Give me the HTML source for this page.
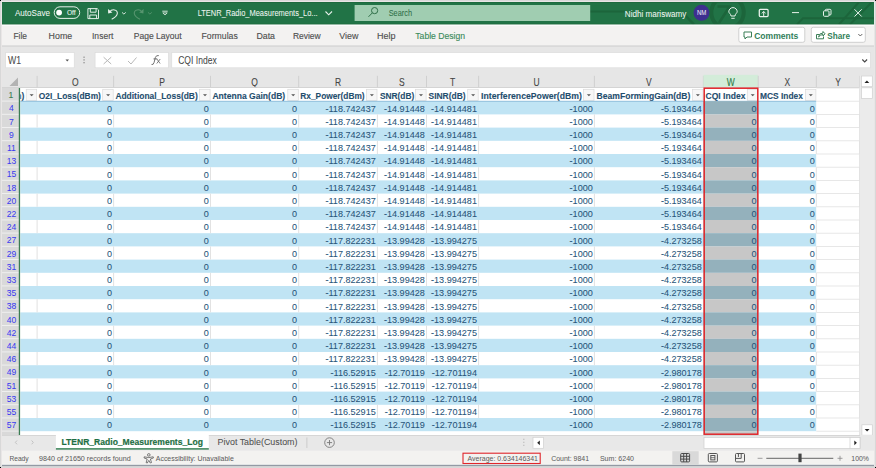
<!DOCTYPE html>
<html><head><meta charset="utf-8">
<style>
*{margin:0;padding:0}
html,body{width:876px;height:468px;overflow:hidden;background:#d6d6d6}
svg{display:block;font-family:"Liberation Sans",sans-serif}
</style></head><body>
<svg width="876" height="468" viewBox="0 0 876 468">
<rect x="0" y="0" width="876" height="468" fill="#d8d8d8" />
<rect x="1" y="1" width="874" height="465" fill="#e9e6e6" />
<rect x="2" y="2" width="872" height="22.7" fill="#217346" />
<rect x="2" y="2" width="872" height="1" fill="#1d6a3e" />
<rect x="2" y="23.7" width="872" height="1" fill="#1d6a3e" />
<clipPath id="tb"><rect x="2" y="2" width="872" height="22.5"/></clipPath><g clip-path="url(#tb)">
<circle cx="727.5" cy="12.5" r="16.2" fill="none" stroke="#1c653b" stroke-width="4"/>
<path d="M717.5 6.5 H729.5 L719 23" fill="none" stroke="#1c653b" stroke-width="2.6"/>
<path d="M683 13 L694 24.5" stroke="#1c653b" stroke-width="2.5"/>
<path d="M590 11.4 H625" stroke="#1c653b" stroke-width="2"/>
<path d="M797 24.5 L803 18.3 H874" fill="none" stroke="#1c653b" stroke-width="2"/>
<path d="M839 24.5 L859 2 M850 24.5 L872 2" stroke="#1c653b" stroke-width="2"/>
</g>
<text transform="translate(15.00 15.60) scale(0.9091 1)" font-size="8.88" fill="#eef5f0" stroke="#eef5f0" stroke-width="0.055">AutoSave</text>
<rect x="54.2" y="6.8" width="25.5" height="11.6" rx="5.8" fill="none" stroke="#e8f1eb" stroke-width="1"/>
<circle cx="59.1" cy="12.6" r="2.9" fill="#ffffff"/>
<text transform="translate(66.90 15.00) scale(0.8696 1)" font-size="7.59" fill="#e8f1eb" stroke="#e8f1eb" stroke-width="0.115">Off</text>
<g fill="none" stroke="#e3efe7" stroke-width="1"><path d="M87.9 8.6 H97.2 L98.5 9.9 V18.6 H87.9 Z"/><path d="M90.3 8.6 V12.2 H96.1 V8.6"/><path d="M89.8 18.6 V15 H96.6 V18.6"/></g>
<path d="M108 9 L108.2 13.6 L112.4 12.6 Z" fill="#e8f1eb"/>
<path d="M109.6 12 C111.8 8.6 117.8 9.3 117.3 13.6 C117 16 114.5 17.8 111.7 19.3" fill="none" stroke="#e8f1eb" stroke-width="1.05"/>
<path d="M122 12.4 L123.9 14.1 L125.8 12.4" fill="none" stroke="#e8f1eb" stroke-width="0.9"/>
<path d="M143.6 9 L143.4 13.6 L139.2 12.6 Z" fill="#57956f"/>
<path d="M142 12 C139.8 8.6 133.8 9.3 134.3 13.6 C134.6 16 137.1 17.8 139.9 19.3" fill="none" stroke="#57956f" stroke-width="1.05"/>
<path d="M148 12.4 L149.9 14.1 L151.8 12.4" fill="none" stroke="#57956f" stroke-width="0.9"/>
<path d="M162.3 11.2 H167.7" stroke="#e8f1eb" stroke-width="0.9"/><path d="M162.8 12.9 L165 15 L167.2 12.9 Z" fill="none" stroke="#e8f1eb" stroke-width="0.8"/>
<text transform="translate(197.70 16.40) scale(0.8475 1)" font-size="8.83" fill="#eef5f0" stroke="#eef5f0" stroke-width="0.059">LTENR_Radio_Measurements_Lo...</text>
<path d="M325.5 11.5 L328.7 14.8 L332 11.5" fill="none" stroke="#e8f1eb" stroke-width="1.1"/>
<rect x="354.6" y="5" width="235.6" height="16" fill="#a0cdb1" />
<g fill="none" stroke="#2f6f48" stroke-width="1"><circle cx="374.6" cy="10.6" r="3.1"/><path d="M372.3 12.9 L368.5 16.8"/></g>
<text transform="translate(388.70 16.30) scale(0.8000 1)" font-size="9.19" fill="#2f6f48" stroke="#2f6f48" stroke-width="0.062">Search</text>
<text transform="translate(624.80 16.80) scale(0.9091 1)" font-size="8.89" fill="#eef5f0" stroke="#eef5f0" stroke-width="0.055">Nidhi mariswamy</text>
<circle cx="701.5" cy="12.8" r="8" fill="#3d2f8f"/>
<text transform="translate(696.88 15.40) scale(0.8200 1)" font-size="7.40" fill="#f4f2fa">NM</text>
<g fill="none" stroke="#e8f1eb" stroke-width="1"><path d="M731 16 C731 14 728.8 13 728.8 11.8 A4.2 4.2 0 0 1 737.2 11.8 C737.2 13 735 14 735 16 Z"/><path d="M731.3 18.3 H734.7"/></g>
<g fill="none" stroke="#e8f1eb" stroke-width="1"><rect x="759.3" y="9.4" width="8.8" height="7.2" rx="1" stroke-width="1.3"/><path d="M763.7 16 V11.6 M761.9 13.4 L763.7 11.4 L765.5 13.4"/></g>
<path d="M792 12.6 H799" stroke="#e8f1eb" stroke-width="1"/>
<g fill="none" stroke="#e8f1eb" stroke-width="1"><rect x="823.5" y="10.8" width="5.5" height="5.5" rx="1"/><path d="M825.3 10.8 V10.3 Q825.3 9.3 826.3 9.3 H830 Q831 9.3 831 10.3 V14 Q831 15 830 15 H829"/></g>
<path d="M854.5 9.3 L861.7 16.5 M861.7 9.3 L854.5 16.5" stroke="#e8f1eb" stroke-width="1"/>
<rect x="2" y="24.7" width="872" height="20.3" fill="#f3f2f1" />
<rect x="2" y="24.7" width="872" height="1.2" fill="#fcfcfc" />
<rect x="2" y="45" width="872" height="2" fill="#d9d9d9" />
<text transform="translate(13.40 38.90) scale(0.8614 1)" font-size="9.80" fill="#4e4e4e" stroke="#4e4e4e" stroke-width="0.139">File</text>
<text transform="translate(48.60 38.90) scale(0.9026 1)" font-size="9.80" fill="#4e4e4e" stroke="#4e4e4e" stroke-width="0.133">Home</text>
<text transform="translate(92.00 38.90) scale(0.8731 1)" font-size="9.80" fill="#4e4e4e" stroke="#4e4e4e" stroke-width="0.137">Insert</text>
<text transform="translate(133.70 38.90) scale(0.8703 1)" font-size="9.80" fill="#4e4e4e" stroke="#4e4e4e" stroke-width="0.138">Page Layout</text>
<text transform="translate(201.50 38.90) scale(0.8887 1)" font-size="9.80" fill="#4e4e4e" stroke="#4e4e4e" stroke-width="0.135">Formulas</text>
<text transform="translate(256.40 38.90) scale(0.8982 1)" font-size="9.80" fill="#4e4e4e" stroke="#4e4e4e" stroke-width="0.134">Data</text>
<text transform="translate(292.90 38.90) scale(0.8674 1)" font-size="9.80" fill="#4e4e4e" stroke="#4e4e4e" stroke-width="0.138">Review</text>
<text transform="translate(339.20 38.90) scale(0.9104 1)" font-size="9.80" fill="#4e4e4e" stroke="#4e4e4e" stroke-width="0.132">View</text>
<text transform="translate(377.00 38.90) scale(0.9227 1)" font-size="9.80" fill="#4e4e4e" stroke="#4e4e4e" stroke-width="0.130">Help</text>
<text transform="translate(415.30 38.90) scale(0.8808 1)" font-size="9.80" fill="#3a8a5a" stroke="#3a8a5a" stroke-width="0.136">Table Design</text>
<rect x="738.8" y="27.3" width="66" height="15" rx="2" fill="#ffffff" stroke="#cfcfcf" stroke-width="1"/>
<path d="M744 32 H751.5 V37 H747 L745 39 V37 H744 Z" fill="none" stroke="#3b7f57" stroke-width="1"/>
<text transform="translate(754.20 38.80) scale(0.9091 1)" font-size="9.41" fill="#32805a" font-weight="bold">Comments</text>
<rect x="811.3" y="27.3" width="54" height="15" rx="2" fill="#ffffff" stroke="#cfcfcf" stroke-width="1"/>
<g fill="none" stroke="#3b7f57" stroke-width="1"><path d="M819 34.5 H816.5 V38.8 H823.5 V36.5"/><path d="M818.5 37 Q819 33 823 33 V31.5 L825 33.8 L823 36 V34.5 Q820.5 34.5 818.5 37 Z"/></g>
<text transform="translate(827.20 38.80) scale(0.9091 1)" font-size="9.02" fill="#32805a" font-weight="bold">Share</text>
<path d="M858.3 34 L860.3 36 L862.3 34" fill="none" stroke="#555" stroke-width="0.9"/>
<rect x="2" y="47" width="872" height="28.5" fill="#e6e6e6" />
<rect x="2" y="45" width="872" height="0.8" fill="#e0e0e0" />
<rect x="5.7" y="52.6" width="68.5" height="15.2" fill="#ffffff" stroke="#d9d9d9" stroke-width="0.6"/>
<text transform="translate(8.00 63.70) scale(0.8696 1)" font-size="10.04" fill="#4a4a4a" stroke="#4a4a4a" stroke-width="0.057">W1</text>
<path d="M65.5 59.6 H69 L67.25 61.4 Z" fill="#555"/>
<g fill="#8a8a8a"><rect x="83.4" y="56.6" width="1.3" height="1.2"/><rect x="83.4" y="59.3" width="1.3" height="1.2"/><rect x="83.4" y="62.1" width="1.3" height="1.2"/></g>
<rect x="95.1" y="52.6" width="73.3" height="15.2" fill="#ffffff" stroke="#d9d9d9" stroke-width="0.6"/>
<path d="M103.6 57.2 L111.2 64 M111.2 57.2 L103.6 64" stroke="#b8b8b8" stroke-width="1"/>
<path d="M128 61 L131 64 L136.5 57.5" fill="none" stroke="#b8b8b8" stroke-width="1"/>
<g fill="none" stroke="#5a5a5a" stroke-width="0.85" stroke-linecap="round"><path d="M151.9 64.6 Q153.4 65.2 154.1 62.4 L155.4 57.4 Q156.1 55.1 158.4 55.5"/><path d="M153.9 58.9 H156.8"/><path d="M157.1 59.3 L159.9 63.2 M160 59.3 L157 63.2" stroke-width="0.75"/></g>
<rect x="171.8" y="52.6" width="698.6" height="15.2" fill="#ffffff" stroke="#d9d9d9" stroke-width="0.6"/>
<text transform="translate(178.20 63.90) scale(0.8475 1)" font-size="10.09" fill="#4a4a4a" stroke="#4a4a4a" stroke-width="0.059">CQI Index</text>
<path d="M862.3 59.5 L864.7 62 L867.1 59.5" fill="none" stroke="#444" stroke-width="1.1"/>
<rect x="2" y="75.5" width="858" height="12.5" fill="#e6e6e6" />
<path d="M9.5 86 L18 86 L18 77.5 Z" fill="#b3b3b3"/>
<rect x="36.6" y="75.8" width="1" height="11.7" fill="#d0d0d0"/>
<text transform="translate(72.04 85.70) scale(0.8500 1)" font-size="10.00" fill="#444444" stroke="#444444" stroke-width="0.094">O</text>
<rect x="113.1" y="75.8" width="1" height="11.7" fill="#d0d0d0"/>
<text transform="translate(159.22 85.70) scale(0.8500 1)" font-size="10.00" fill="#444444" stroke="#444444" stroke-width="0.094">P</text>
<rect x="210.0" y="75.8" width="1" height="11.7" fill="#d0d0d0"/>
<text transform="translate(251.29 85.70) scale(0.8500 1)" font-size="10.00" fill="#444444" stroke="#444444" stroke-width="0.094">Q</text>
<rect x="298.2" y="75.8" width="1" height="11.7" fill="#d0d0d0"/>
<text transform="translate(334.98 85.70) scale(0.8500 1)" font-size="10.00" fill="#444444" stroke="#444444" stroke-width="0.094">R</text>
<rect x="376.9" y="75.8" width="1" height="11.7" fill="#d0d0d0"/>
<text transform="translate(399.12 85.70) scale(0.8500 1)" font-size="10.00" fill="#444444" stroke="#444444" stroke-width="0.094">S</text>
<rect x="426.0" y="75.8" width="1" height="11.7" fill="#d0d0d0"/>
<text transform="translate(449.95 85.70) scale(0.8500 1)" font-size="10.00" fill="#444444" stroke="#444444" stroke-width="0.094">T</text>
<rect x="478.1" y="75.8" width="1" height="11.7" fill="#d0d0d0"/>
<text transform="translate(533.43 85.70) scale(0.8500 1)" font-size="10.00" fill="#444444" stroke="#444444" stroke-width="0.094">U</text>
<rect x="593.9" y="75.8" width="1" height="11.7" fill="#d0d0d0"/>
<text transform="translate(646.07 85.70) scale(0.8500 1)" font-size="10.00" fill="#444444" stroke="#444444" stroke-width="0.094">V</text>
<rect x="702.9" y="75.8" width="1" height="11.7" fill="#d0d0d0"/>
<rect x="703.4" y="74.8" width="54.80000000000007" height="12.8" fill="#d3ecd9" />
<text transform="translate(726.79 85.70) scale(0.8500 1)" font-size="10.00" fill="#2e7a46" stroke="#2e7a46" stroke-width="0.094">W</text>
<rect x="757.7" y="75.8" width="1" height="11.7" fill="#d0d0d0"/>
<text transform="translate(784.42 85.70) scale(0.8500 1)" font-size="10.00" fill="#444444" stroke="#444444" stroke-width="0.094">X</text>
<rect x="815.8" y="75.8" width="1" height="11.7" fill="#d0d0d0"/>
<text transform="translate(835.17 85.70) scale(0.8500 1)" font-size="10.00" fill="#444444" stroke="#444444" stroke-width="0.094">Y</text>
<rect x="859.2" y="75.8" width="1" height="11.7" fill="#d0d0d0"/>
<rect x="2" y="87.1" width="858" height="0.9" fill="#d2d2d2" />
<rect x="2" y="88" width="858" height="347" fill="#ffffff" />
<rect x="2" y="88" width="17" height="347" fill="#d9d9d9" />
<rect x="20.3" y="101.2" width="795.9" height="13.2" fill="#c0e4f4" />
<rect x="20.3" y="127.6" width="795.9" height="13.2" fill="#c0e4f4" />
<rect x="20.3" y="154.0" width="795.9" height="13.2" fill="#c0e4f4" />
<rect x="20.3" y="180.4" width="795.9" height="13.2" fill="#c0e4f4" />
<rect x="20.3" y="206.8" width="795.9" height="13.2" fill="#c0e4f4" />
<rect x="20.3" y="233.2" width="795.9" height="13.2" fill="#c0e4f4" />
<rect x="20.3" y="259.6" width="795.9" height="13.2" fill="#c0e4f4" />
<rect x="20.3" y="286.0" width="795.9" height="13.2" fill="#c0e4f4" />
<rect x="20.3" y="312.4" width="795.9" height="13.2" fill="#c0e4f4" />
<rect x="20.3" y="338.8" width="795.9" height="13.2" fill="#c0e4f4" />
<rect x="20.3" y="365.2" width="795.9" height="13.2" fill="#c0e4f4" />
<rect x="20.3" y="391.6" width="795.9" height="13.2" fill="#c0e4f4" />
<rect x="20.3" y="418.0" width="795.9" height="13.2" fill="#c0e4f4" />
<rect x="36.6" y="114.4" width="1" height="13.2" fill="#e2e2e2" />
<rect x="113.1" y="114.4" width="1" height="13.2" fill="#e2e2e2" />
<rect x="210.0" y="114.4" width="1" height="13.2" fill="#e2e2e2" />
<rect x="298.2" y="114.4" width="1" height="13.2" fill="#e2e2e2" />
<rect x="376.9" y="114.4" width="1" height="13.2" fill="#e2e2e2" />
<rect x="426.0" y="114.4" width="1" height="13.2" fill="#e2e2e2" />
<rect x="478.1" y="114.4" width="1" height="13.2" fill="#e2e2e2" />
<rect x="593.9" y="114.4" width="1" height="13.2" fill="#e2e2e2" />
<rect x="702.9" y="114.4" width="1" height="13.2" fill="#e2e2e2" />
<rect x="757.7" y="114.4" width="1" height="13.2" fill="#e2e2e2" />
<rect x="815.8" y="114.4" width="1" height="13.2" fill="#e2e2e2" />
<rect x="859.2" y="114.4" width="1" height="13.2" fill="#e2e2e2" />
<rect x="36.6" y="140.8" width="1" height="13.2" fill="#e2e2e2" />
<rect x="113.1" y="140.8" width="1" height="13.2" fill="#e2e2e2" />
<rect x="210.0" y="140.8" width="1" height="13.2" fill="#e2e2e2" />
<rect x="298.2" y="140.8" width="1" height="13.2" fill="#e2e2e2" />
<rect x="376.9" y="140.8" width="1" height="13.2" fill="#e2e2e2" />
<rect x="426.0" y="140.8" width="1" height="13.2" fill="#e2e2e2" />
<rect x="478.1" y="140.8" width="1" height="13.2" fill="#e2e2e2" />
<rect x="593.9" y="140.8" width="1" height="13.2" fill="#e2e2e2" />
<rect x="702.9" y="140.8" width="1" height="13.2" fill="#e2e2e2" />
<rect x="757.7" y="140.8" width="1" height="13.2" fill="#e2e2e2" />
<rect x="815.8" y="140.8" width="1" height="13.2" fill="#e2e2e2" />
<rect x="859.2" y="140.8" width="1" height="13.2" fill="#e2e2e2" />
<rect x="36.6" y="167.2" width="1" height="13.2" fill="#e2e2e2" />
<rect x="113.1" y="167.2" width="1" height="13.2" fill="#e2e2e2" />
<rect x="210.0" y="167.2" width="1" height="13.2" fill="#e2e2e2" />
<rect x="298.2" y="167.2" width="1" height="13.2" fill="#e2e2e2" />
<rect x="376.9" y="167.2" width="1" height="13.2" fill="#e2e2e2" />
<rect x="426.0" y="167.2" width="1" height="13.2" fill="#e2e2e2" />
<rect x="478.1" y="167.2" width="1" height="13.2" fill="#e2e2e2" />
<rect x="593.9" y="167.2" width="1" height="13.2" fill="#e2e2e2" />
<rect x="702.9" y="167.2" width="1" height="13.2" fill="#e2e2e2" />
<rect x="757.7" y="167.2" width="1" height="13.2" fill="#e2e2e2" />
<rect x="815.8" y="167.2" width="1" height="13.2" fill="#e2e2e2" />
<rect x="859.2" y="167.2" width="1" height="13.2" fill="#e2e2e2" />
<rect x="36.6" y="193.6" width="1" height="13.2" fill="#e2e2e2" />
<rect x="113.1" y="193.6" width="1" height="13.2" fill="#e2e2e2" />
<rect x="210.0" y="193.6" width="1" height="13.2" fill="#e2e2e2" />
<rect x="298.2" y="193.6" width="1" height="13.2" fill="#e2e2e2" />
<rect x="376.9" y="193.6" width="1" height="13.2" fill="#e2e2e2" />
<rect x="426.0" y="193.6" width="1" height="13.2" fill="#e2e2e2" />
<rect x="478.1" y="193.6" width="1" height="13.2" fill="#e2e2e2" />
<rect x="593.9" y="193.6" width="1" height="13.2" fill="#e2e2e2" />
<rect x="702.9" y="193.6" width="1" height="13.2" fill="#e2e2e2" />
<rect x="757.7" y="193.6" width="1" height="13.2" fill="#e2e2e2" />
<rect x="815.8" y="193.6" width="1" height="13.2" fill="#e2e2e2" />
<rect x="859.2" y="193.6" width="1" height="13.2" fill="#e2e2e2" />
<rect x="36.6" y="220.0" width="1" height="13.2" fill="#e2e2e2" />
<rect x="113.1" y="220.0" width="1" height="13.2" fill="#e2e2e2" />
<rect x="210.0" y="220.0" width="1" height="13.2" fill="#e2e2e2" />
<rect x="298.2" y="220.0" width="1" height="13.2" fill="#e2e2e2" />
<rect x="376.9" y="220.0" width="1" height="13.2" fill="#e2e2e2" />
<rect x="426.0" y="220.0" width="1" height="13.2" fill="#e2e2e2" />
<rect x="478.1" y="220.0" width="1" height="13.2" fill="#e2e2e2" />
<rect x="593.9" y="220.0" width="1" height="13.2" fill="#e2e2e2" />
<rect x="702.9" y="220.0" width="1" height="13.2" fill="#e2e2e2" />
<rect x="757.7" y="220.0" width="1" height="13.2" fill="#e2e2e2" />
<rect x="815.8" y="220.0" width="1" height="13.2" fill="#e2e2e2" />
<rect x="859.2" y="220.0" width="1" height="13.2" fill="#e2e2e2" />
<rect x="36.6" y="246.4" width="1" height="13.2" fill="#e2e2e2" />
<rect x="113.1" y="246.4" width="1" height="13.2" fill="#e2e2e2" />
<rect x="210.0" y="246.4" width="1" height="13.2" fill="#e2e2e2" />
<rect x="298.2" y="246.4" width="1" height="13.2" fill="#e2e2e2" />
<rect x="376.9" y="246.4" width="1" height="13.2" fill="#e2e2e2" />
<rect x="426.0" y="246.4" width="1" height="13.2" fill="#e2e2e2" />
<rect x="478.1" y="246.4" width="1" height="13.2" fill="#e2e2e2" />
<rect x="593.9" y="246.4" width="1" height="13.2" fill="#e2e2e2" />
<rect x="702.9" y="246.4" width="1" height="13.2" fill="#e2e2e2" />
<rect x="757.7" y="246.4" width="1" height="13.2" fill="#e2e2e2" />
<rect x="815.8" y="246.4" width="1" height="13.2" fill="#e2e2e2" />
<rect x="859.2" y="246.4" width="1" height="13.2" fill="#e2e2e2" />
<rect x="36.6" y="272.8" width="1" height="13.2" fill="#e2e2e2" />
<rect x="113.1" y="272.8" width="1" height="13.2" fill="#e2e2e2" />
<rect x="210.0" y="272.8" width="1" height="13.2" fill="#e2e2e2" />
<rect x="298.2" y="272.8" width="1" height="13.2" fill="#e2e2e2" />
<rect x="376.9" y="272.8" width="1" height="13.2" fill="#e2e2e2" />
<rect x="426.0" y="272.8" width="1" height="13.2" fill="#e2e2e2" />
<rect x="478.1" y="272.8" width="1" height="13.2" fill="#e2e2e2" />
<rect x="593.9" y="272.8" width="1" height="13.2" fill="#e2e2e2" />
<rect x="702.9" y="272.8" width="1" height="13.2" fill="#e2e2e2" />
<rect x="757.7" y="272.8" width="1" height="13.2" fill="#e2e2e2" />
<rect x="815.8" y="272.8" width="1" height="13.2" fill="#e2e2e2" />
<rect x="859.2" y="272.8" width="1" height="13.2" fill="#e2e2e2" />
<rect x="36.6" y="299.2" width="1" height="13.2" fill="#e2e2e2" />
<rect x="113.1" y="299.2" width="1" height="13.2" fill="#e2e2e2" />
<rect x="210.0" y="299.2" width="1" height="13.2" fill="#e2e2e2" />
<rect x="298.2" y="299.2" width="1" height="13.2" fill="#e2e2e2" />
<rect x="376.9" y="299.2" width="1" height="13.2" fill="#e2e2e2" />
<rect x="426.0" y="299.2" width="1" height="13.2" fill="#e2e2e2" />
<rect x="478.1" y="299.2" width="1" height="13.2" fill="#e2e2e2" />
<rect x="593.9" y="299.2" width="1" height="13.2" fill="#e2e2e2" />
<rect x="702.9" y="299.2" width="1" height="13.2" fill="#e2e2e2" />
<rect x="757.7" y="299.2" width="1" height="13.2" fill="#e2e2e2" />
<rect x="815.8" y="299.2" width="1" height="13.2" fill="#e2e2e2" />
<rect x="859.2" y="299.2" width="1" height="13.2" fill="#e2e2e2" />
<rect x="36.6" y="325.6" width="1" height="13.2" fill="#e2e2e2" />
<rect x="113.1" y="325.6" width="1" height="13.2" fill="#e2e2e2" />
<rect x="210.0" y="325.6" width="1" height="13.2" fill="#e2e2e2" />
<rect x="298.2" y="325.6" width="1" height="13.2" fill="#e2e2e2" />
<rect x="376.9" y="325.6" width="1" height="13.2" fill="#e2e2e2" />
<rect x="426.0" y="325.6" width="1" height="13.2" fill="#e2e2e2" />
<rect x="478.1" y="325.6" width="1" height="13.2" fill="#e2e2e2" />
<rect x="593.9" y="325.6" width="1" height="13.2" fill="#e2e2e2" />
<rect x="702.9" y="325.6" width="1" height="13.2" fill="#e2e2e2" />
<rect x="757.7" y="325.6" width="1" height="13.2" fill="#e2e2e2" />
<rect x="815.8" y="325.6" width="1" height="13.2" fill="#e2e2e2" />
<rect x="859.2" y="325.6" width="1" height="13.2" fill="#e2e2e2" />
<rect x="36.6" y="352.0" width="1" height="13.2" fill="#e2e2e2" />
<rect x="113.1" y="352.0" width="1" height="13.2" fill="#e2e2e2" />
<rect x="210.0" y="352.0" width="1" height="13.2" fill="#e2e2e2" />
<rect x="298.2" y="352.0" width="1" height="13.2" fill="#e2e2e2" />
<rect x="376.9" y="352.0" width="1" height="13.2" fill="#e2e2e2" />
<rect x="426.0" y="352.0" width="1" height="13.2" fill="#e2e2e2" />
<rect x="478.1" y="352.0" width="1" height="13.2" fill="#e2e2e2" />
<rect x="593.9" y="352.0" width="1" height="13.2" fill="#e2e2e2" />
<rect x="702.9" y="352.0" width="1" height="13.2" fill="#e2e2e2" />
<rect x="757.7" y="352.0" width="1" height="13.2" fill="#e2e2e2" />
<rect x="815.8" y="352.0" width="1" height="13.2" fill="#e2e2e2" />
<rect x="859.2" y="352.0" width="1" height="13.2" fill="#e2e2e2" />
<rect x="36.6" y="378.4" width="1" height="13.2" fill="#e2e2e2" />
<rect x="113.1" y="378.4" width="1" height="13.2" fill="#e2e2e2" />
<rect x="210.0" y="378.4" width="1" height="13.2" fill="#e2e2e2" />
<rect x="298.2" y="378.4" width="1" height="13.2" fill="#e2e2e2" />
<rect x="376.9" y="378.4" width="1" height="13.2" fill="#e2e2e2" />
<rect x="426.0" y="378.4" width="1" height="13.2" fill="#e2e2e2" />
<rect x="478.1" y="378.4" width="1" height="13.2" fill="#e2e2e2" />
<rect x="593.9" y="378.4" width="1" height="13.2" fill="#e2e2e2" />
<rect x="702.9" y="378.4" width="1" height="13.2" fill="#e2e2e2" />
<rect x="757.7" y="378.4" width="1" height="13.2" fill="#e2e2e2" />
<rect x="815.8" y="378.4" width="1" height="13.2" fill="#e2e2e2" />
<rect x="859.2" y="378.4" width="1" height="13.2" fill="#e2e2e2" />
<rect x="36.6" y="404.8" width="1" height="13.2" fill="#e2e2e2" />
<rect x="113.1" y="404.8" width="1" height="13.2" fill="#e2e2e2" />
<rect x="210.0" y="404.8" width="1" height="13.2" fill="#e2e2e2" />
<rect x="298.2" y="404.8" width="1" height="13.2" fill="#e2e2e2" />
<rect x="376.9" y="404.8" width="1" height="13.2" fill="#e2e2e2" />
<rect x="426.0" y="404.8" width="1" height="13.2" fill="#e2e2e2" />
<rect x="478.1" y="404.8" width="1" height="13.2" fill="#e2e2e2" />
<rect x="593.9" y="404.8" width="1" height="13.2" fill="#e2e2e2" />
<rect x="702.9" y="404.8" width="1" height="13.2" fill="#e2e2e2" />
<rect x="757.7" y="404.8" width="1" height="13.2" fill="#e2e2e2" />
<rect x="815.8" y="404.8" width="1" height="13.2" fill="#e2e2e2" />
<rect x="859.2" y="404.8" width="1" height="13.2" fill="#e2e2e2" />
<rect x="816.3" y="87.6" width="43.4" height="0.8" fill="#e2e2e2" />
<rect x="816.3" y="100.8" width="43.4" height="0.8" fill="#e2e2e2" />
<rect x="816.3" y="114.0" width="43.4" height="0.8" fill="#e2e2e2" />
<rect x="816.3" y="127.2" width="43.4" height="0.8" fill="#e2e2e2" />
<rect x="816.3" y="140.4" width="43.4" height="0.8" fill="#e2e2e2" />
<rect x="816.3" y="153.6" width="43.4" height="0.8" fill="#e2e2e2" />
<rect x="816.3" y="166.8" width="43.4" height="0.8" fill="#e2e2e2" />
<rect x="816.3" y="180.0" width="43.4" height="0.8" fill="#e2e2e2" />
<rect x="816.3" y="193.2" width="43.4" height="0.8" fill="#e2e2e2" />
<rect x="816.3" y="206.4" width="43.4" height="0.8" fill="#e2e2e2" />
<rect x="816.3" y="219.6" width="43.4" height="0.8" fill="#e2e2e2" />
<rect x="816.3" y="232.8" width="43.4" height="0.8" fill="#e2e2e2" />
<rect x="816.3" y="246.0" width="43.4" height="0.8" fill="#e2e2e2" />
<rect x="816.3" y="259.2" width="43.4" height="0.8" fill="#e2e2e2" />
<rect x="816.3" y="272.4" width="43.4" height="0.8" fill="#e2e2e2" />
<rect x="816.3" y="285.6" width="43.4" height="0.8" fill="#e2e2e2" />
<rect x="816.3" y="298.8" width="43.4" height="0.8" fill="#e2e2e2" />
<rect x="816.3" y="312.0" width="43.4" height="0.8" fill="#e2e2e2" />
<rect x="816.3" y="325.2" width="43.4" height="0.8" fill="#e2e2e2" />
<rect x="816.3" y="338.4" width="43.4" height="0.8" fill="#e2e2e2" />
<rect x="816.3" y="351.6" width="43.4" height="0.8" fill="#e2e2e2" />
<rect x="816.3" y="364.8" width="43.4" height="0.8" fill="#e2e2e2" />
<rect x="816.3" y="378.0" width="43.4" height="0.8" fill="#e2e2e2" />
<rect x="816.3" y="391.2" width="43.4" height="0.8" fill="#e2e2e2" />
<rect x="816.3" y="404.4" width="43.4" height="0.8" fill="#e2e2e2" />
<rect x="816.3" y="417.6" width="43.4" height="0.8" fill="#e2e2e2" />
<rect x="816.3" y="430.8" width="43.4" height="0.8" fill="#e2e2e2" />
<rect x="859.2" y="88" width="0.9" height="347" fill="#dcdcdc" />
<rect x="2" y="100.6" width="17" height="1" fill="#efefef" />
<rect x="2" y="113.8" width="17" height="1" fill="#efefef" />
<rect x="2" y="127.0" width="17" height="1" fill="#efefef" />
<rect x="2" y="140.2" width="17" height="1" fill="#efefef" />
<rect x="2" y="153.4" width="17" height="1" fill="#efefef" />
<rect x="2" y="166.6" width="17" height="1" fill="#efefef" />
<rect x="2" y="179.8" width="17" height="1" fill="#efefef" />
<rect x="2" y="193.0" width="17" height="1" fill="#efefef" />
<rect x="2" y="206.2" width="17" height="1" fill="#efefef" />
<rect x="2" y="219.4" width="17" height="1" fill="#efefef" />
<rect x="2" y="232.6" width="17" height="1" fill="#efefef" />
<rect x="2" y="245.8" width="17" height="1" fill="#efefef" />
<rect x="2" y="259.0" width="17" height="1" fill="#efefef" />
<rect x="2" y="272.2" width="17" height="1" fill="#efefef" />
<rect x="2" y="285.4" width="17" height="1" fill="#efefef" />
<rect x="2" y="298.6" width="17" height="1" fill="#efefef" />
<rect x="2" y="311.8" width="17" height="1" fill="#efefef" />
<rect x="2" y="325.0" width="17" height="1" fill="#efefef" />
<rect x="2" y="338.2" width="17" height="1" fill="#efefef" />
<rect x="2" y="351.4" width="17" height="1" fill="#efefef" />
<rect x="2" y="364.6" width="17" height="1" fill="#efefef" />
<rect x="2" y="377.8" width="17" height="1" fill="#efefef" />
<rect x="2" y="391.0" width="17" height="1" fill="#efefef" />
<rect x="2" y="404.2" width="17" height="1" fill="#efefef" />
<rect x="2" y="417.4" width="17" height="1" fill="#efefef" />
<rect x="2" y="430.6" width="17" height="1" fill="#efefef" />
<rect x="2" y="443.8" width="17" height="1" fill="#efefef" />
<text transform="translate(8.62 98.20) scale(0.9000 1)" font-size="9.50" fill="#3b7a4f" stroke="#3b7a4f" stroke-width="0.111">1</text>
<text transform="translate(9.02 111.40) scale(0.9000 1)" font-size="9.50" fill="#3b3bf0" stroke="#3b3bf0" stroke-width="0.044">4</text>
<text transform="translate(9.02 124.60) scale(0.9000 1)" font-size="9.50" fill="#3b3bf0" stroke="#3b3bf0" stroke-width="0.044">7</text>
<text transform="translate(9.02 137.80) scale(0.9000 1)" font-size="9.50" fill="#3b3bf0" stroke="#3b3bf0" stroke-width="0.044">9</text>
<text transform="translate(6.96 151.00) scale(0.9000 1)" font-size="9.50" fill="#3b3bf0" stroke="#3b3bf0" stroke-width="0.044">11</text>
<text transform="translate(6.65 164.20) scale(0.9000 1)" font-size="9.50" fill="#3b3bf0" stroke="#3b3bf0" stroke-width="0.044">13</text>
<text transform="translate(6.65 177.40) scale(0.9000 1)" font-size="9.50" fill="#3b3bf0" stroke="#3b3bf0" stroke-width="0.044">15</text>
<text transform="translate(6.65 190.60) scale(0.9000 1)" font-size="9.50" fill="#3b3bf0" stroke="#3b3bf0" stroke-width="0.044">18</text>
<text transform="translate(6.65 203.80) scale(0.9000 1)" font-size="9.50" fill="#3b3bf0" stroke="#3b3bf0" stroke-width="0.044">20</text>
<text transform="translate(6.65 217.00) scale(0.9000 1)" font-size="9.50" fill="#3b3bf0" stroke="#3b3bf0" stroke-width="0.044">22</text>
<text transform="translate(6.65 230.20) scale(0.9000 1)" font-size="9.50" fill="#3b3bf0" stroke="#3b3bf0" stroke-width="0.044">24</text>
<text transform="translate(6.65 243.40) scale(0.9000 1)" font-size="9.50" fill="#3b3bf0" stroke="#3b3bf0" stroke-width="0.044">27</text>
<text transform="translate(6.65 256.60) scale(0.9000 1)" font-size="9.50" fill="#3b3bf0" stroke="#3b3bf0" stroke-width="0.044">29</text>
<text transform="translate(6.65 269.80) scale(0.9000 1)" font-size="9.50" fill="#3b3bf0" stroke="#3b3bf0" stroke-width="0.044">31</text>
<text transform="translate(6.65 283.00) scale(0.9000 1)" font-size="9.50" fill="#3b3bf0" stroke="#3b3bf0" stroke-width="0.044">33</text>
<text transform="translate(6.65 296.20) scale(0.9000 1)" font-size="9.50" fill="#3b3bf0" stroke="#3b3bf0" stroke-width="0.044">35</text>
<text transform="translate(6.65 309.40) scale(0.9000 1)" font-size="9.50" fill="#3b3bf0" stroke="#3b3bf0" stroke-width="0.044">38</text>
<text transform="translate(6.65 322.60) scale(0.9000 1)" font-size="9.50" fill="#3b3bf0" stroke="#3b3bf0" stroke-width="0.044">40</text>
<text transform="translate(6.65 335.80) scale(0.9000 1)" font-size="9.50" fill="#3b3bf0" stroke="#3b3bf0" stroke-width="0.044">42</text>
<text transform="translate(6.65 349.00) scale(0.9000 1)" font-size="9.50" fill="#3b3bf0" stroke="#3b3bf0" stroke-width="0.044">44</text>
<text transform="translate(6.65 362.20) scale(0.9000 1)" font-size="9.50" fill="#3b3bf0" stroke="#3b3bf0" stroke-width="0.044">46</text>
<text transform="translate(6.65 375.40) scale(0.9000 1)" font-size="9.50" fill="#3b3bf0" stroke="#3b3bf0" stroke-width="0.044">49</text>
<text transform="translate(6.65 388.60) scale(0.9000 1)" font-size="9.50" fill="#3b3bf0" stroke="#3b3bf0" stroke-width="0.044">51</text>
<text transform="translate(6.65 401.80) scale(0.9000 1)" font-size="9.50" fill="#3b3bf0" stroke="#3b3bf0" stroke-width="0.044">53</text>
<text transform="translate(6.65 415.00) scale(0.9000 1)" font-size="9.50" fill="#3b3bf0" stroke="#3b3bf0" stroke-width="0.044">55</text>
<text transform="translate(6.65 428.20) scale(0.9000 1)" font-size="9.50" fill="#3b3bf0" stroke="#3b3bf0" stroke-width="0.044">57</text>
<rect x="18.8" y="88" width="1.3" height="347" fill="#3a7d53" />
<rect x="26.2" y="89.3" width="10.5" height="11.2" fill="#f7f7f7" stroke="#dadada" stroke-width="0.7"/>
<path d="M29.6 94.2 H33.6 L31.6 96.2 Z" fill="#555"/>
<rect x="102.7" y="89.3" width="10.5" height="11.2" fill="#f7f7f7" stroke="#dadada" stroke-width="0.7"/>
<path d="M106.1 94.2 H110.1 L108.1 96.2 Z" fill="#555"/>
<text transform="translate(38.80 98.50) scale(0.8929 1)" font-size="9.43" fill="#1f4e6e" stroke="#1f4e6e" stroke-width="0.112" font-weight="bold">O2I_Loss(dBm)</text>
<rect x="199.6" y="89.3" width="10.5" height="11.2" fill="#f7f7f7" stroke="#dadada" stroke-width="0.7"/>
<path d="M203.0 94.2 H207.0 L205.0 96.2 Z" fill="#555"/>
<text transform="translate(115.40 98.50) scale(0.8929 1)" font-size="9.45" fill="#1f4e6e" stroke="#1f4e6e" stroke-width="0.112" font-weight="bold">Additional_Loss(dB)</text>
<rect x="287.8" y="89.3" width="10.5" height="11.2" fill="#f7f7f7" stroke="#dadada" stroke-width="0.7"/>
<path d="M291.2 94.2 H295.2 L293.2 96.2 Z" fill="#555"/>
<text transform="translate(212.40 98.50) scale(0.8929 1)" font-size="9.61" fill="#1f4e6e" stroke="#1f4e6e" stroke-width="0.112" font-weight="bold">Antenna Gain(dB)</text>
<rect x="366.5" y="89.3" width="10.5" height="11.2" fill="#f7f7f7" stroke="#dadada" stroke-width="0.7"/>
<path d="M369.9 94.2 H373.9 L371.9 96.2 Z" fill="#555"/>
<text transform="translate(300.30 98.50) scale(0.8929 1)" font-size="9.34" fill="#1f4e6e" stroke="#1f4e6e" stroke-width="0.112" font-weight="bold">Rx_Power(dBm)</text>
<rect x="415.6" y="89.3" width="10.5" height="11.2" fill="#f7f7f7" stroke="#dadada" stroke-width="0.7"/>
<path d="M419.0 94.2 H423.0 L421.0 96.2 Z" fill="#555"/>
<text transform="translate(379.90 98.50) scale(0.8929 1)" font-size="9.37" fill="#1f4e6e" stroke="#1f4e6e" stroke-width="0.112" font-weight="bold">SNR(dB)</text>
<rect x="467.7" y="89.3" width="10.5" height="11.2" fill="#f7f7f7" stroke="#dadada" stroke-width="0.7"/>
<path d="M471.1 94.2 H475.1 L473.1 96.2 Z" fill="#555"/>
<text transform="translate(428.50 98.50) scale(0.8929 1)" font-size="9.47" fill="#1f4e6e" stroke="#1f4e6e" stroke-width="0.112" font-weight="bold">SINR(dB)</text>
<rect x="583.5" y="89.3" width="10.5" height="11.2" fill="#f7f7f7" stroke="#dadada" stroke-width="0.7"/>
<path d="M586.9 94.2 H590.9 L588.9 96.2 Z" fill="#555"/>
<text transform="translate(481.10 98.50) scale(0.8929 1)" font-size="9.73" fill="#1f4e6e" stroke="#1f4e6e" stroke-width="0.112" font-weight="bold">InterferencePower(dBm)</text>
<rect x="692.5" y="89.3" width="10.5" height="11.2" fill="#f7f7f7" stroke="#dadada" stroke-width="0.7"/>
<path d="M695.9 94.2 H699.9 L697.9 96.2 Z" fill="#555"/>
<text transform="translate(596.60 98.50) scale(0.8929 1)" font-size="9.61" fill="#1f4e6e" stroke="#1f4e6e" stroke-width="0.112" font-weight="bold">BeamFormingGain(dB)</text>
<rect x="747.3" y="89.3" width="10.5" height="11.2" fill="#f7f7f7" stroke="#dadada" stroke-width="0.7"/>
<path d="M750.7 94.2 H754.7 L752.7 96.2 Z" fill="#555"/>
<text transform="translate(705.50 98.50) scale(0.8929 1)" font-size="9.58" fill="#1f4e6e" stroke="#1f4e6e" stroke-width="0.112" font-weight="bold">CQI Index</text>
<rect x="805.4" y="89.3" width="10.5" height="11.2" fill="#f7f7f7" stroke="#dadada" stroke-width="0.7"/>
<path d="M808.8 94.2 H812.8 L810.8 96.2 Z" fill="#555"/>
<text transform="translate(760.00 98.50) scale(0.8929 1)" font-size="9.44" fill="#1f4e6e" stroke="#1f4e6e" stroke-width="0.112" font-weight="bold">MCS Index</text>
<clipPath id="nclip"><rect x="20.3" y="88" width="16" height="13"/></clipPath><g clip-path="url(#nclip)">
<text transform="translate(2.68 98.50) scale(0.9000 1)" font-size="9.40" fill="#1f4e6e" stroke="#1f4e6e" stroke-width="0.111" font-weight="bold">dBm)</text>
</g>
<rect x="20.3" y="100.8" width="795.9" height="1" fill="#8fbfdb" />
<text transform="translate(106.95 111.60) scale(0.9172 1)" font-size="9.90" fill="#28557a" stroke="#28557a" stroke-width="0.065">0</text>
<text transform="translate(203.85 111.60) scale(0.9172 1)" font-size="9.90" fill="#28557a" stroke="#28557a" stroke-width="0.065">0</text>
<text transform="translate(292.05 111.60) scale(0.9172 1)" font-size="9.90" fill="#28557a" stroke="#28557a" stroke-width="0.065">0</text>
<text transform="translate(325.48 111.60) scale(0.9172 1)" font-size="9.90" fill="#28557a" stroke="#28557a" stroke-width="0.065">-118.742437</text>
<text transform="translate(384.00 111.60) scale(0.9172 1)" font-size="9.90" fill="#28557a" stroke="#28557a" stroke-width="0.065">-14.91448</text>
<text transform="translate(431.06 111.60) scale(0.9172 1)" font-size="9.90" fill="#28557a" stroke="#28557a" stroke-width="0.065">-14.914481</text>
<text transform="translate(569.57 111.60) scale(0.9172 1)" font-size="9.90" fill="#28557a" stroke="#28557a" stroke-width="0.065">-1000</text>
<text transform="translate(660.90 111.60) scale(0.9172 1)" font-size="9.90" fill="#28557a" stroke="#28557a" stroke-width="0.065">-5.193464</text>
<rect x="703.4" y="101.2" width="54.80000000000007" height="13.2" fill="#94b1bc" />
<text transform="translate(751.55 111.60) scale(0.9172 1)" font-size="9.90" fill="#28557a" stroke="#28557a" stroke-width="0.065">0</text>
<text transform="translate(809.65 111.60) scale(0.9172 1)" font-size="9.90" fill="#28557a" stroke="#28557a" stroke-width="0.065">0</text>
<text transform="translate(106.95 124.80) scale(0.9172 1)" font-size="9.90" fill="#28557a" stroke="#28557a" stroke-width="0.065">0</text>
<text transform="translate(203.85 124.80) scale(0.9172 1)" font-size="9.90" fill="#28557a" stroke="#28557a" stroke-width="0.065">0</text>
<text transform="translate(292.05 124.80) scale(0.9172 1)" font-size="9.90" fill="#28557a" stroke="#28557a" stroke-width="0.065">0</text>
<text transform="translate(325.48 124.80) scale(0.9172 1)" font-size="9.90" fill="#28557a" stroke="#28557a" stroke-width="0.065">-118.742437</text>
<text transform="translate(384.00 124.80) scale(0.9172 1)" font-size="9.90" fill="#28557a" stroke="#28557a" stroke-width="0.065">-14.91448</text>
<text transform="translate(431.06 124.80) scale(0.9172 1)" font-size="9.90" fill="#28557a" stroke="#28557a" stroke-width="0.065">-14.914481</text>
<text transform="translate(569.57 124.80) scale(0.9172 1)" font-size="9.90" fill="#28557a" stroke="#28557a" stroke-width="0.065">-1000</text>
<text transform="translate(660.90 124.80) scale(0.9172 1)" font-size="9.90" fill="#28557a" stroke="#28557a" stroke-width="0.065">-5.193464</text>
<rect x="703.4" y="114.4" width="54.80000000000007" height="13.2" fill="#c7c7c7" />
<text transform="translate(751.55 124.80) scale(0.9172 1)" font-size="9.90" fill="#28557a" stroke="#28557a" stroke-width="0.065">0</text>
<text transform="translate(809.65 124.80) scale(0.9172 1)" font-size="9.90" fill="#28557a" stroke="#28557a" stroke-width="0.065">0</text>
<text transform="translate(106.95 138.00) scale(0.9172 1)" font-size="9.90" fill="#28557a" stroke="#28557a" stroke-width="0.065">0</text>
<text transform="translate(203.85 138.00) scale(0.9172 1)" font-size="9.90" fill="#28557a" stroke="#28557a" stroke-width="0.065">0</text>
<text transform="translate(292.05 138.00) scale(0.9172 1)" font-size="9.90" fill="#28557a" stroke="#28557a" stroke-width="0.065">0</text>
<text transform="translate(325.48 138.00) scale(0.9172 1)" font-size="9.90" fill="#28557a" stroke="#28557a" stroke-width="0.065">-118.742437</text>
<text transform="translate(384.00 138.00) scale(0.9172 1)" font-size="9.90" fill="#28557a" stroke="#28557a" stroke-width="0.065">-14.91448</text>
<text transform="translate(431.06 138.00) scale(0.9172 1)" font-size="9.90" fill="#28557a" stroke="#28557a" stroke-width="0.065">-14.914481</text>
<text transform="translate(569.57 138.00) scale(0.9172 1)" font-size="9.90" fill="#28557a" stroke="#28557a" stroke-width="0.065">-1000</text>
<text transform="translate(660.90 138.00) scale(0.9172 1)" font-size="9.90" fill="#28557a" stroke="#28557a" stroke-width="0.065">-5.193464</text>
<rect x="703.4" y="127.6" width="54.80000000000007" height="13.2" fill="#94b1bc" />
<text transform="translate(751.55 138.00) scale(0.9172 1)" font-size="9.90" fill="#28557a" stroke="#28557a" stroke-width="0.065">0</text>
<text transform="translate(809.65 138.00) scale(0.9172 1)" font-size="9.90" fill="#28557a" stroke="#28557a" stroke-width="0.065">0</text>
<text transform="translate(106.95 151.20) scale(0.9172 1)" font-size="9.90" fill="#28557a" stroke="#28557a" stroke-width="0.065">0</text>
<text transform="translate(203.85 151.20) scale(0.9172 1)" font-size="9.90" fill="#28557a" stroke="#28557a" stroke-width="0.065">0</text>
<text transform="translate(292.05 151.20) scale(0.9172 1)" font-size="9.90" fill="#28557a" stroke="#28557a" stroke-width="0.065">0</text>
<text transform="translate(325.48 151.20) scale(0.9172 1)" font-size="9.90" fill="#28557a" stroke="#28557a" stroke-width="0.065">-118.742437</text>
<text transform="translate(384.00 151.20) scale(0.9172 1)" font-size="9.90" fill="#28557a" stroke="#28557a" stroke-width="0.065">-14.91448</text>
<text transform="translate(431.06 151.20) scale(0.9172 1)" font-size="9.90" fill="#28557a" stroke="#28557a" stroke-width="0.065">-14.914481</text>
<text transform="translate(569.57 151.20) scale(0.9172 1)" font-size="9.90" fill="#28557a" stroke="#28557a" stroke-width="0.065">-1000</text>
<text transform="translate(660.90 151.20) scale(0.9172 1)" font-size="9.90" fill="#28557a" stroke="#28557a" stroke-width="0.065">-5.193464</text>
<rect x="703.4" y="140.8" width="54.80000000000007" height="13.2" fill="#c7c7c7" />
<text transform="translate(751.55 151.20) scale(0.9172 1)" font-size="9.90" fill="#28557a" stroke="#28557a" stroke-width="0.065">0</text>
<text transform="translate(809.65 151.20) scale(0.9172 1)" font-size="9.90" fill="#28557a" stroke="#28557a" stroke-width="0.065">0</text>
<text transform="translate(106.95 164.40) scale(0.9172 1)" font-size="9.90" fill="#28557a" stroke="#28557a" stroke-width="0.065">0</text>
<text transform="translate(203.85 164.40) scale(0.9172 1)" font-size="9.90" fill="#28557a" stroke="#28557a" stroke-width="0.065">0</text>
<text transform="translate(292.05 164.40) scale(0.9172 1)" font-size="9.90" fill="#28557a" stroke="#28557a" stroke-width="0.065">0</text>
<text transform="translate(325.48 164.40) scale(0.9172 1)" font-size="9.90" fill="#28557a" stroke="#28557a" stroke-width="0.065">-118.742437</text>
<text transform="translate(384.00 164.40) scale(0.9172 1)" font-size="9.90" fill="#28557a" stroke="#28557a" stroke-width="0.065">-14.91448</text>
<text transform="translate(431.06 164.40) scale(0.9172 1)" font-size="9.90" fill="#28557a" stroke="#28557a" stroke-width="0.065">-14.914481</text>
<text transform="translate(569.57 164.40) scale(0.9172 1)" font-size="9.90" fill="#28557a" stroke="#28557a" stroke-width="0.065">-1000</text>
<text transform="translate(660.90 164.40) scale(0.9172 1)" font-size="9.90" fill="#28557a" stroke="#28557a" stroke-width="0.065">-5.193464</text>
<rect x="703.4" y="154.0" width="54.80000000000007" height="13.2" fill="#94b1bc" />
<text transform="translate(751.55 164.40) scale(0.9172 1)" font-size="9.90" fill="#28557a" stroke="#28557a" stroke-width="0.065">0</text>
<text transform="translate(809.65 164.40) scale(0.9172 1)" font-size="9.90" fill="#28557a" stroke="#28557a" stroke-width="0.065">0</text>
<text transform="translate(106.95 177.60) scale(0.9172 1)" font-size="9.90" fill="#28557a" stroke="#28557a" stroke-width="0.065">0</text>
<text transform="translate(203.85 177.60) scale(0.9172 1)" font-size="9.90" fill="#28557a" stroke="#28557a" stroke-width="0.065">0</text>
<text transform="translate(292.05 177.60) scale(0.9172 1)" font-size="9.90" fill="#28557a" stroke="#28557a" stroke-width="0.065">0</text>
<text transform="translate(325.48 177.60) scale(0.9172 1)" font-size="9.90" fill="#28557a" stroke="#28557a" stroke-width="0.065">-118.742437</text>
<text transform="translate(384.00 177.60) scale(0.9172 1)" font-size="9.90" fill="#28557a" stroke="#28557a" stroke-width="0.065">-14.91448</text>
<text transform="translate(431.06 177.60) scale(0.9172 1)" font-size="9.90" fill="#28557a" stroke="#28557a" stroke-width="0.065">-14.914481</text>
<text transform="translate(569.57 177.60) scale(0.9172 1)" font-size="9.90" fill="#28557a" stroke="#28557a" stroke-width="0.065">-1000</text>
<text transform="translate(660.90 177.60) scale(0.9172 1)" font-size="9.90" fill="#28557a" stroke="#28557a" stroke-width="0.065">-5.193464</text>
<rect x="703.4" y="167.2" width="54.80000000000007" height="13.2" fill="#c7c7c7" />
<text transform="translate(751.55 177.60) scale(0.9172 1)" font-size="9.90" fill="#28557a" stroke="#28557a" stroke-width="0.065">0</text>
<text transform="translate(809.65 177.60) scale(0.9172 1)" font-size="9.90" fill="#28557a" stroke="#28557a" stroke-width="0.065">0</text>
<text transform="translate(106.95 190.80) scale(0.9172 1)" font-size="9.90" fill="#28557a" stroke="#28557a" stroke-width="0.065">0</text>
<text transform="translate(203.85 190.80) scale(0.9172 1)" font-size="9.90" fill="#28557a" stroke="#28557a" stroke-width="0.065">0</text>
<text transform="translate(292.05 190.80) scale(0.9172 1)" font-size="9.90" fill="#28557a" stroke="#28557a" stroke-width="0.065">0</text>
<text transform="translate(325.48 190.80) scale(0.9172 1)" font-size="9.90" fill="#28557a" stroke="#28557a" stroke-width="0.065">-118.742437</text>
<text transform="translate(384.00 190.80) scale(0.9172 1)" font-size="9.90" fill="#28557a" stroke="#28557a" stroke-width="0.065">-14.91448</text>
<text transform="translate(431.06 190.80) scale(0.9172 1)" font-size="9.90" fill="#28557a" stroke="#28557a" stroke-width="0.065">-14.914481</text>
<text transform="translate(569.57 190.80) scale(0.9172 1)" font-size="9.90" fill="#28557a" stroke="#28557a" stroke-width="0.065">-1000</text>
<text transform="translate(660.90 190.80) scale(0.9172 1)" font-size="9.90" fill="#28557a" stroke="#28557a" stroke-width="0.065">-5.193464</text>
<rect x="703.4" y="180.4" width="54.80000000000007" height="13.2" fill="#94b1bc" />
<text transform="translate(751.55 190.80) scale(0.9172 1)" font-size="9.90" fill="#28557a" stroke="#28557a" stroke-width="0.065">0</text>
<text transform="translate(809.65 190.80) scale(0.9172 1)" font-size="9.90" fill="#28557a" stroke="#28557a" stroke-width="0.065">0</text>
<text transform="translate(106.95 204.00) scale(0.9172 1)" font-size="9.90" fill="#28557a" stroke="#28557a" stroke-width="0.065">0</text>
<text transform="translate(203.85 204.00) scale(0.9172 1)" font-size="9.90" fill="#28557a" stroke="#28557a" stroke-width="0.065">0</text>
<text transform="translate(292.05 204.00) scale(0.9172 1)" font-size="9.90" fill="#28557a" stroke="#28557a" stroke-width="0.065">0</text>
<text transform="translate(325.48 204.00) scale(0.9172 1)" font-size="9.90" fill="#28557a" stroke="#28557a" stroke-width="0.065">-118.742437</text>
<text transform="translate(384.00 204.00) scale(0.9172 1)" font-size="9.90" fill="#28557a" stroke="#28557a" stroke-width="0.065">-14.91448</text>
<text transform="translate(431.06 204.00) scale(0.9172 1)" font-size="9.90" fill="#28557a" stroke="#28557a" stroke-width="0.065">-14.914481</text>
<text transform="translate(569.57 204.00) scale(0.9172 1)" font-size="9.90" fill="#28557a" stroke="#28557a" stroke-width="0.065">-1000</text>
<text transform="translate(660.90 204.00) scale(0.9172 1)" font-size="9.90" fill="#28557a" stroke="#28557a" stroke-width="0.065">-5.193464</text>
<rect x="703.4" y="193.6" width="54.80000000000007" height="13.2" fill="#c7c7c7" />
<text transform="translate(751.55 204.00) scale(0.9172 1)" font-size="9.90" fill="#28557a" stroke="#28557a" stroke-width="0.065">0</text>
<text transform="translate(809.65 204.00) scale(0.9172 1)" font-size="9.90" fill="#28557a" stroke="#28557a" stroke-width="0.065">0</text>
<text transform="translate(106.95 217.20) scale(0.9172 1)" font-size="9.90" fill="#28557a" stroke="#28557a" stroke-width="0.065">0</text>
<text transform="translate(203.85 217.20) scale(0.9172 1)" font-size="9.90" fill="#28557a" stroke="#28557a" stroke-width="0.065">0</text>
<text transform="translate(292.05 217.20) scale(0.9172 1)" font-size="9.90" fill="#28557a" stroke="#28557a" stroke-width="0.065">0</text>
<text transform="translate(325.48 217.20) scale(0.9172 1)" font-size="9.90" fill="#28557a" stroke="#28557a" stroke-width="0.065">-118.742437</text>
<text transform="translate(384.00 217.20) scale(0.9172 1)" font-size="9.90" fill="#28557a" stroke="#28557a" stroke-width="0.065">-14.91448</text>
<text transform="translate(431.06 217.20) scale(0.9172 1)" font-size="9.90" fill="#28557a" stroke="#28557a" stroke-width="0.065">-14.914481</text>
<text transform="translate(569.57 217.20) scale(0.9172 1)" font-size="9.90" fill="#28557a" stroke="#28557a" stroke-width="0.065">-1000</text>
<text transform="translate(660.90 217.20) scale(0.9172 1)" font-size="9.90" fill="#28557a" stroke="#28557a" stroke-width="0.065">-5.193464</text>
<rect x="703.4" y="206.8" width="54.80000000000007" height="13.2" fill="#94b1bc" />
<text transform="translate(751.55 217.20) scale(0.9172 1)" font-size="9.90" fill="#28557a" stroke="#28557a" stroke-width="0.065">0</text>
<text transform="translate(809.65 217.20) scale(0.9172 1)" font-size="9.90" fill="#28557a" stroke="#28557a" stroke-width="0.065">0</text>
<text transform="translate(106.95 230.40) scale(0.9172 1)" font-size="9.90" fill="#28557a" stroke="#28557a" stroke-width="0.065">0</text>
<text transform="translate(203.85 230.40) scale(0.9172 1)" font-size="9.90" fill="#28557a" stroke="#28557a" stroke-width="0.065">0</text>
<text transform="translate(292.05 230.40) scale(0.9172 1)" font-size="9.90" fill="#28557a" stroke="#28557a" stroke-width="0.065">0</text>
<text transform="translate(325.48 230.40) scale(0.9172 1)" font-size="9.90" fill="#28557a" stroke="#28557a" stroke-width="0.065">-118.742437</text>
<text transform="translate(384.00 230.40) scale(0.9172 1)" font-size="9.90" fill="#28557a" stroke="#28557a" stroke-width="0.065">-14.91448</text>
<text transform="translate(431.06 230.40) scale(0.9172 1)" font-size="9.90" fill="#28557a" stroke="#28557a" stroke-width="0.065">-14.914481</text>
<text transform="translate(569.57 230.40) scale(0.9172 1)" font-size="9.90" fill="#28557a" stroke="#28557a" stroke-width="0.065">-1000</text>
<text transform="translate(660.90 230.40) scale(0.9172 1)" font-size="9.90" fill="#28557a" stroke="#28557a" stroke-width="0.065">-5.193464</text>
<rect x="703.4" y="220.0" width="54.80000000000007" height="13.2" fill="#c7c7c7" />
<text transform="translate(751.55 230.40) scale(0.9172 1)" font-size="9.90" fill="#28557a" stroke="#28557a" stroke-width="0.065">0</text>
<text transform="translate(809.65 230.40) scale(0.9172 1)" font-size="9.90" fill="#28557a" stroke="#28557a" stroke-width="0.065">0</text>
<text transform="translate(106.95 243.60) scale(0.9172 1)" font-size="9.90" fill="#28557a" stroke="#28557a" stroke-width="0.065">0</text>
<text transform="translate(203.85 243.60) scale(0.9172 1)" font-size="9.90" fill="#28557a" stroke="#28557a" stroke-width="0.065">0</text>
<text transform="translate(292.05 243.60) scale(0.9172 1)" font-size="9.90" fill="#28557a" stroke="#28557a" stroke-width="0.065">0</text>
<text transform="translate(325.48 243.60) scale(0.9172 1)" font-size="9.90" fill="#28557a" stroke="#28557a" stroke-width="0.065">-117.822231</text>
<text transform="translate(384.00 243.60) scale(0.9172 1)" font-size="9.90" fill="#28557a" stroke="#28557a" stroke-width="0.065">-13.99428</text>
<text transform="translate(431.06 243.60) scale(0.9172 1)" font-size="9.90" fill="#28557a" stroke="#28557a" stroke-width="0.065">-13.994275</text>
<text transform="translate(569.57 243.60) scale(0.9172 1)" font-size="9.90" fill="#28557a" stroke="#28557a" stroke-width="0.065">-1000</text>
<text transform="translate(660.90 243.60) scale(0.9172 1)" font-size="9.90" fill="#28557a" stroke="#28557a" stroke-width="0.065">-4.273258</text>
<rect x="703.4" y="233.2" width="54.80000000000007" height="13.2" fill="#94b1bc" />
<text transform="translate(751.55 243.60) scale(0.9172 1)" font-size="9.90" fill="#28557a" stroke="#28557a" stroke-width="0.065">0</text>
<text transform="translate(809.65 243.60) scale(0.9172 1)" font-size="9.90" fill="#28557a" stroke="#28557a" stroke-width="0.065">0</text>
<text transform="translate(106.95 256.80) scale(0.9172 1)" font-size="9.90" fill="#28557a" stroke="#28557a" stroke-width="0.065">0</text>
<text transform="translate(203.85 256.80) scale(0.9172 1)" font-size="9.90" fill="#28557a" stroke="#28557a" stroke-width="0.065">0</text>
<text transform="translate(292.05 256.80) scale(0.9172 1)" font-size="9.90" fill="#28557a" stroke="#28557a" stroke-width="0.065">0</text>
<text transform="translate(325.48 256.80) scale(0.9172 1)" font-size="9.90" fill="#28557a" stroke="#28557a" stroke-width="0.065">-117.822231</text>
<text transform="translate(384.00 256.80) scale(0.9172 1)" font-size="9.90" fill="#28557a" stroke="#28557a" stroke-width="0.065">-13.99428</text>
<text transform="translate(431.06 256.80) scale(0.9172 1)" font-size="9.90" fill="#28557a" stroke="#28557a" stroke-width="0.065">-13.994275</text>
<text transform="translate(569.57 256.80) scale(0.9172 1)" font-size="9.90" fill="#28557a" stroke="#28557a" stroke-width="0.065">-1000</text>
<text transform="translate(660.90 256.80) scale(0.9172 1)" font-size="9.90" fill="#28557a" stroke="#28557a" stroke-width="0.065">-4.273258</text>
<rect x="703.4" y="246.4" width="54.80000000000007" height="13.2" fill="#c7c7c7" />
<text transform="translate(751.55 256.80) scale(0.9172 1)" font-size="9.90" fill="#28557a" stroke="#28557a" stroke-width="0.065">0</text>
<text transform="translate(809.65 256.80) scale(0.9172 1)" font-size="9.90" fill="#28557a" stroke="#28557a" stroke-width="0.065">0</text>
<text transform="translate(106.95 270.00) scale(0.9172 1)" font-size="9.90" fill="#28557a" stroke="#28557a" stroke-width="0.065">0</text>
<text transform="translate(203.85 270.00) scale(0.9172 1)" font-size="9.90" fill="#28557a" stroke="#28557a" stroke-width="0.065">0</text>
<text transform="translate(292.05 270.00) scale(0.9172 1)" font-size="9.90" fill="#28557a" stroke="#28557a" stroke-width="0.065">0</text>
<text transform="translate(325.48 270.00) scale(0.9172 1)" font-size="9.90" fill="#28557a" stroke="#28557a" stroke-width="0.065">-117.822231</text>
<text transform="translate(384.00 270.00) scale(0.9172 1)" font-size="9.90" fill="#28557a" stroke="#28557a" stroke-width="0.065">-13.99428</text>
<text transform="translate(431.06 270.00) scale(0.9172 1)" font-size="9.90" fill="#28557a" stroke="#28557a" stroke-width="0.065">-13.994275</text>
<text transform="translate(569.57 270.00) scale(0.9172 1)" font-size="9.90" fill="#28557a" stroke="#28557a" stroke-width="0.065">-1000</text>
<text transform="translate(660.90 270.00) scale(0.9172 1)" font-size="9.90" fill="#28557a" stroke="#28557a" stroke-width="0.065">-4.273258</text>
<rect x="703.4" y="259.6" width="54.80000000000007" height="13.2" fill="#94b1bc" />
<text transform="translate(751.55 270.00) scale(0.9172 1)" font-size="9.90" fill="#28557a" stroke="#28557a" stroke-width="0.065">0</text>
<text transform="translate(809.65 270.00) scale(0.9172 1)" font-size="9.90" fill="#28557a" stroke="#28557a" stroke-width="0.065">0</text>
<text transform="translate(106.95 283.20) scale(0.9172 1)" font-size="9.90" fill="#28557a" stroke="#28557a" stroke-width="0.065">0</text>
<text transform="translate(203.85 283.20) scale(0.9172 1)" font-size="9.90" fill="#28557a" stroke="#28557a" stroke-width="0.065">0</text>
<text transform="translate(292.05 283.20) scale(0.9172 1)" font-size="9.90" fill="#28557a" stroke="#28557a" stroke-width="0.065">0</text>
<text transform="translate(325.48 283.20) scale(0.9172 1)" font-size="9.90" fill="#28557a" stroke="#28557a" stroke-width="0.065">-117.822231</text>
<text transform="translate(384.00 283.20) scale(0.9172 1)" font-size="9.90" fill="#28557a" stroke="#28557a" stroke-width="0.065">-13.99428</text>
<text transform="translate(431.06 283.20) scale(0.9172 1)" font-size="9.90" fill="#28557a" stroke="#28557a" stroke-width="0.065">-13.994275</text>
<text transform="translate(569.57 283.20) scale(0.9172 1)" font-size="9.90" fill="#28557a" stroke="#28557a" stroke-width="0.065">-1000</text>
<text transform="translate(660.90 283.20) scale(0.9172 1)" font-size="9.90" fill="#28557a" stroke="#28557a" stroke-width="0.065">-4.273258</text>
<rect x="703.4" y="272.8" width="54.80000000000007" height="13.2" fill="#c7c7c7" />
<text transform="translate(751.55 283.20) scale(0.9172 1)" font-size="9.90" fill="#28557a" stroke="#28557a" stroke-width="0.065">0</text>
<text transform="translate(809.65 283.20) scale(0.9172 1)" font-size="9.90" fill="#28557a" stroke="#28557a" stroke-width="0.065">0</text>
<text transform="translate(106.95 296.40) scale(0.9172 1)" font-size="9.90" fill="#28557a" stroke="#28557a" stroke-width="0.065">0</text>
<text transform="translate(203.85 296.40) scale(0.9172 1)" font-size="9.90" fill="#28557a" stroke="#28557a" stroke-width="0.065">0</text>
<text transform="translate(292.05 296.40) scale(0.9172 1)" font-size="9.90" fill="#28557a" stroke="#28557a" stroke-width="0.065">0</text>
<text transform="translate(325.48 296.40) scale(0.9172 1)" font-size="9.90" fill="#28557a" stroke="#28557a" stroke-width="0.065">-117.822231</text>
<text transform="translate(384.00 296.40) scale(0.9172 1)" font-size="9.90" fill="#28557a" stroke="#28557a" stroke-width="0.065">-13.99428</text>
<text transform="translate(431.06 296.40) scale(0.9172 1)" font-size="9.90" fill="#28557a" stroke="#28557a" stroke-width="0.065">-13.994275</text>
<text transform="translate(569.57 296.40) scale(0.9172 1)" font-size="9.90" fill="#28557a" stroke="#28557a" stroke-width="0.065">-1000</text>
<text transform="translate(660.90 296.40) scale(0.9172 1)" font-size="9.90" fill="#28557a" stroke="#28557a" stroke-width="0.065">-4.273258</text>
<rect x="703.4" y="286.0" width="54.80000000000007" height="13.2" fill="#94b1bc" />
<text transform="translate(751.55 296.40) scale(0.9172 1)" font-size="9.90" fill="#28557a" stroke="#28557a" stroke-width="0.065">0</text>
<text transform="translate(809.65 296.40) scale(0.9172 1)" font-size="9.90" fill="#28557a" stroke="#28557a" stroke-width="0.065">0</text>
<text transform="translate(106.95 309.60) scale(0.9172 1)" font-size="9.90" fill="#28557a" stroke="#28557a" stroke-width="0.065">0</text>
<text transform="translate(203.85 309.60) scale(0.9172 1)" font-size="9.90" fill="#28557a" stroke="#28557a" stroke-width="0.065">0</text>
<text transform="translate(292.05 309.60) scale(0.9172 1)" font-size="9.90" fill="#28557a" stroke="#28557a" stroke-width="0.065">0</text>
<text transform="translate(325.48 309.60) scale(0.9172 1)" font-size="9.90" fill="#28557a" stroke="#28557a" stroke-width="0.065">-117.822231</text>
<text transform="translate(384.00 309.60) scale(0.9172 1)" font-size="9.90" fill="#28557a" stroke="#28557a" stroke-width="0.065">-13.99428</text>
<text transform="translate(431.06 309.60) scale(0.9172 1)" font-size="9.90" fill="#28557a" stroke="#28557a" stroke-width="0.065">-13.994275</text>
<text transform="translate(569.57 309.60) scale(0.9172 1)" font-size="9.90" fill="#28557a" stroke="#28557a" stroke-width="0.065">-1000</text>
<text transform="translate(660.90 309.60) scale(0.9172 1)" font-size="9.90" fill="#28557a" stroke="#28557a" stroke-width="0.065">-4.273258</text>
<rect x="703.4" y="299.2" width="54.80000000000007" height="13.2" fill="#c7c7c7" />
<text transform="translate(751.55 309.60) scale(0.9172 1)" font-size="9.90" fill="#28557a" stroke="#28557a" stroke-width="0.065">0</text>
<text transform="translate(809.65 309.60) scale(0.9172 1)" font-size="9.90" fill="#28557a" stroke="#28557a" stroke-width="0.065">0</text>
<text transform="translate(106.95 322.80) scale(0.9172 1)" font-size="9.90" fill="#28557a" stroke="#28557a" stroke-width="0.065">0</text>
<text transform="translate(203.85 322.80) scale(0.9172 1)" font-size="9.90" fill="#28557a" stroke="#28557a" stroke-width="0.065">0</text>
<text transform="translate(292.05 322.80) scale(0.9172 1)" font-size="9.90" fill="#28557a" stroke="#28557a" stroke-width="0.065">0</text>
<text transform="translate(325.48 322.80) scale(0.9172 1)" font-size="9.90" fill="#28557a" stroke="#28557a" stroke-width="0.065">-117.822231</text>
<text transform="translate(384.00 322.80) scale(0.9172 1)" font-size="9.90" fill="#28557a" stroke="#28557a" stroke-width="0.065">-13.99428</text>
<text transform="translate(431.06 322.80) scale(0.9172 1)" font-size="9.90" fill="#28557a" stroke="#28557a" stroke-width="0.065">-13.994275</text>
<text transform="translate(569.57 322.80) scale(0.9172 1)" font-size="9.90" fill="#28557a" stroke="#28557a" stroke-width="0.065">-1000</text>
<text transform="translate(660.90 322.80) scale(0.9172 1)" font-size="9.90" fill="#28557a" stroke="#28557a" stroke-width="0.065">-4.273258</text>
<rect x="703.4" y="312.4" width="54.80000000000007" height="13.2" fill="#94b1bc" />
<text transform="translate(751.55 322.80) scale(0.9172 1)" font-size="9.90" fill="#28557a" stroke="#28557a" stroke-width="0.065">0</text>
<text transform="translate(809.65 322.80) scale(0.9172 1)" font-size="9.90" fill="#28557a" stroke="#28557a" stroke-width="0.065">0</text>
<text transform="translate(106.95 336.00) scale(0.9172 1)" font-size="9.90" fill="#28557a" stroke="#28557a" stroke-width="0.065">0</text>
<text transform="translate(203.85 336.00) scale(0.9172 1)" font-size="9.90" fill="#28557a" stroke="#28557a" stroke-width="0.065">0</text>
<text transform="translate(292.05 336.00) scale(0.9172 1)" font-size="9.90" fill="#28557a" stroke="#28557a" stroke-width="0.065">0</text>
<text transform="translate(325.48 336.00) scale(0.9172 1)" font-size="9.90" fill="#28557a" stroke="#28557a" stroke-width="0.065">-117.822231</text>
<text transform="translate(384.00 336.00) scale(0.9172 1)" font-size="9.90" fill="#28557a" stroke="#28557a" stroke-width="0.065">-13.99428</text>
<text transform="translate(431.06 336.00) scale(0.9172 1)" font-size="9.90" fill="#28557a" stroke="#28557a" stroke-width="0.065">-13.994275</text>
<text transform="translate(569.57 336.00) scale(0.9172 1)" font-size="9.90" fill="#28557a" stroke="#28557a" stroke-width="0.065">-1000</text>
<text transform="translate(660.90 336.00) scale(0.9172 1)" font-size="9.90" fill="#28557a" stroke="#28557a" stroke-width="0.065">-4.273258</text>
<rect x="703.4" y="325.6" width="54.80000000000007" height="13.2" fill="#c7c7c7" />
<text transform="translate(751.55 336.00) scale(0.9172 1)" font-size="9.90" fill="#28557a" stroke="#28557a" stroke-width="0.065">0</text>
<text transform="translate(809.65 336.00) scale(0.9172 1)" font-size="9.90" fill="#28557a" stroke="#28557a" stroke-width="0.065">0</text>
<text transform="translate(106.95 349.20) scale(0.9172 1)" font-size="9.90" fill="#28557a" stroke="#28557a" stroke-width="0.065">0</text>
<text transform="translate(203.85 349.20) scale(0.9172 1)" font-size="9.90" fill="#28557a" stroke="#28557a" stroke-width="0.065">0</text>
<text transform="translate(292.05 349.20) scale(0.9172 1)" font-size="9.90" fill="#28557a" stroke="#28557a" stroke-width="0.065">0</text>
<text transform="translate(325.48 349.20) scale(0.9172 1)" font-size="9.90" fill="#28557a" stroke="#28557a" stroke-width="0.065">-117.822231</text>
<text transform="translate(384.00 349.20) scale(0.9172 1)" font-size="9.90" fill="#28557a" stroke="#28557a" stroke-width="0.065">-13.99428</text>
<text transform="translate(431.06 349.20) scale(0.9172 1)" font-size="9.90" fill="#28557a" stroke="#28557a" stroke-width="0.065">-13.994275</text>
<text transform="translate(569.57 349.20) scale(0.9172 1)" font-size="9.90" fill="#28557a" stroke="#28557a" stroke-width="0.065">-1000</text>
<text transform="translate(660.90 349.20) scale(0.9172 1)" font-size="9.90" fill="#28557a" stroke="#28557a" stroke-width="0.065">-4.273258</text>
<rect x="703.4" y="338.8" width="54.80000000000007" height="13.2" fill="#94b1bc" />
<text transform="translate(751.55 349.20) scale(0.9172 1)" font-size="9.90" fill="#28557a" stroke="#28557a" stroke-width="0.065">0</text>
<text transform="translate(809.65 349.20) scale(0.9172 1)" font-size="9.90" fill="#28557a" stroke="#28557a" stroke-width="0.065">0</text>
<text transform="translate(106.95 362.40) scale(0.9172 1)" font-size="9.90" fill="#28557a" stroke="#28557a" stroke-width="0.065">0</text>
<text transform="translate(203.85 362.40) scale(0.9172 1)" font-size="9.90" fill="#28557a" stroke="#28557a" stroke-width="0.065">0</text>
<text transform="translate(292.05 362.40) scale(0.9172 1)" font-size="9.90" fill="#28557a" stroke="#28557a" stroke-width="0.065">0</text>
<text transform="translate(325.48 362.40) scale(0.9172 1)" font-size="9.90" fill="#28557a" stroke="#28557a" stroke-width="0.065">-117.822231</text>
<text transform="translate(384.00 362.40) scale(0.9172 1)" font-size="9.90" fill="#28557a" stroke="#28557a" stroke-width="0.065">-13.99428</text>
<text transform="translate(431.06 362.40) scale(0.9172 1)" font-size="9.90" fill="#28557a" stroke="#28557a" stroke-width="0.065">-13.994275</text>
<text transform="translate(569.57 362.40) scale(0.9172 1)" font-size="9.90" fill="#28557a" stroke="#28557a" stroke-width="0.065">-1000</text>
<text transform="translate(660.90 362.40) scale(0.9172 1)" font-size="9.90" fill="#28557a" stroke="#28557a" stroke-width="0.065">-4.273258</text>
<rect x="703.4" y="352.0" width="54.80000000000007" height="13.2" fill="#c7c7c7" />
<text transform="translate(751.55 362.40) scale(0.9172 1)" font-size="9.90" fill="#28557a" stroke="#28557a" stroke-width="0.065">0</text>
<text transform="translate(809.65 362.40) scale(0.9172 1)" font-size="9.90" fill="#28557a" stroke="#28557a" stroke-width="0.065">0</text>
<text transform="translate(106.95 375.60) scale(0.9172 1)" font-size="9.90" fill="#28557a" stroke="#28557a" stroke-width="0.065">0</text>
<text transform="translate(203.85 375.60) scale(0.9172 1)" font-size="9.90" fill="#28557a" stroke="#28557a" stroke-width="0.065">0</text>
<text transform="translate(292.05 375.60) scale(0.9172 1)" font-size="9.90" fill="#28557a" stroke="#28557a" stroke-width="0.065">0</text>
<text transform="translate(330.53 375.60) scale(0.9172 1)" font-size="9.90" fill="#28557a" stroke="#28557a" stroke-width="0.065">-116.52915</text>
<text transform="translate(384.68 375.60) scale(0.9172 1)" font-size="9.90" fill="#28557a" stroke="#28557a" stroke-width="0.065">-12.70119</text>
<text transform="translate(431.73 375.60) scale(0.9172 1)" font-size="9.90" fill="#28557a" stroke="#28557a" stroke-width="0.065">-12.701194</text>
<text transform="translate(569.57 375.60) scale(0.9172 1)" font-size="9.90" fill="#28557a" stroke="#28557a" stroke-width="0.065">-1000</text>
<text transform="translate(660.90 375.60) scale(0.9172 1)" font-size="9.90" fill="#28557a" stroke="#28557a" stroke-width="0.065">-2.980178</text>
<rect x="703.4" y="365.2" width="54.80000000000007" height="13.2" fill="#94b1bc" />
<text transform="translate(751.55 375.60) scale(0.9172 1)" font-size="9.90" fill="#28557a" stroke="#28557a" stroke-width="0.065">0</text>
<text transform="translate(809.65 375.60) scale(0.9172 1)" font-size="9.90" fill="#28557a" stroke="#28557a" stroke-width="0.065">0</text>
<text transform="translate(106.95 388.80) scale(0.9172 1)" font-size="9.90" fill="#28557a" stroke="#28557a" stroke-width="0.065">0</text>
<text transform="translate(203.85 388.80) scale(0.9172 1)" font-size="9.90" fill="#28557a" stroke="#28557a" stroke-width="0.065">0</text>
<text transform="translate(292.05 388.80) scale(0.9172 1)" font-size="9.90" fill="#28557a" stroke="#28557a" stroke-width="0.065">0</text>
<text transform="translate(330.53 388.80) scale(0.9172 1)" font-size="9.90" fill="#28557a" stroke="#28557a" stroke-width="0.065">-116.52915</text>
<text transform="translate(384.68 388.80) scale(0.9172 1)" font-size="9.90" fill="#28557a" stroke="#28557a" stroke-width="0.065">-12.70119</text>
<text transform="translate(431.73 388.80) scale(0.9172 1)" font-size="9.90" fill="#28557a" stroke="#28557a" stroke-width="0.065">-12.701194</text>
<text transform="translate(569.57 388.80) scale(0.9172 1)" font-size="9.90" fill="#28557a" stroke="#28557a" stroke-width="0.065">-1000</text>
<text transform="translate(660.90 388.80) scale(0.9172 1)" font-size="9.90" fill="#28557a" stroke="#28557a" stroke-width="0.065">-2.980178</text>
<rect x="703.4" y="378.4" width="54.80000000000007" height="13.2" fill="#c7c7c7" />
<text transform="translate(751.55 388.80) scale(0.9172 1)" font-size="9.90" fill="#28557a" stroke="#28557a" stroke-width="0.065">0</text>
<text transform="translate(809.65 388.80) scale(0.9172 1)" font-size="9.90" fill="#28557a" stroke="#28557a" stroke-width="0.065">0</text>
<text transform="translate(106.95 402.00) scale(0.9172 1)" font-size="9.90" fill="#28557a" stroke="#28557a" stroke-width="0.065">0</text>
<text transform="translate(203.85 402.00) scale(0.9172 1)" font-size="9.90" fill="#28557a" stroke="#28557a" stroke-width="0.065">0</text>
<text transform="translate(292.05 402.00) scale(0.9172 1)" font-size="9.90" fill="#28557a" stroke="#28557a" stroke-width="0.065">0</text>
<text transform="translate(330.53 402.00) scale(0.9172 1)" font-size="9.90" fill="#28557a" stroke="#28557a" stroke-width="0.065">-116.52915</text>
<text transform="translate(384.68 402.00) scale(0.9172 1)" font-size="9.90" fill="#28557a" stroke="#28557a" stroke-width="0.065">-12.70119</text>
<text transform="translate(431.73 402.00) scale(0.9172 1)" font-size="9.90" fill="#28557a" stroke="#28557a" stroke-width="0.065">-12.701194</text>
<text transform="translate(569.57 402.00) scale(0.9172 1)" font-size="9.90" fill="#28557a" stroke="#28557a" stroke-width="0.065">-1000</text>
<text transform="translate(660.90 402.00) scale(0.9172 1)" font-size="9.90" fill="#28557a" stroke="#28557a" stroke-width="0.065">-2.980178</text>
<rect x="703.4" y="391.6" width="54.80000000000007" height="13.2" fill="#94b1bc" />
<text transform="translate(751.55 402.00) scale(0.9172 1)" font-size="9.90" fill="#28557a" stroke="#28557a" stroke-width="0.065">0</text>
<text transform="translate(809.65 402.00) scale(0.9172 1)" font-size="9.90" fill="#28557a" stroke="#28557a" stroke-width="0.065">0</text>
<text transform="translate(106.95 415.20) scale(0.9172 1)" font-size="9.90" fill="#28557a" stroke="#28557a" stroke-width="0.065">0</text>
<text transform="translate(203.85 415.20) scale(0.9172 1)" font-size="9.90" fill="#28557a" stroke="#28557a" stroke-width="0.065">0</text>
<text transform="translate(292.05 415.20) scale(0.9172 1)" font-size="9.90" fill="#28557a" stroke="#28557a" stroke-width="0.065">0</text>
<text transform="translate(330.53 415.20) scale(0.9172 1)" font-size="9.90" fill="#28557a" stroke="#28557a" stroke-width="0.065">-116.52915</text>
<text transform="translate(384.68 415.20) scale(0.9172 1)" font-size="9.90" fill="#28557a" stroke="#28557a" stroke-width="0.065">-12.70119</text>
<text transform="translate(431.73 415.20) scale(0.9172 1)" font-size="9.90" fill="#28557a" stroke="#28557a" stroke-width="0.065">-12.701194</text>
<text transform="translate(569.57 415.20) scale(0.9172 1)" font-size="9.90" fill="#28557a" stroke="#28557a" stroke-width="0.065">-1000</text>
<text transform="translate(660.90 415.20) scale(0.9172 1)" font-size="9.90" fill="#28557a" stroke="#28557a" stroke-width="0.065">-2.980178</text>
<rect x="703.4" y="404.8" width="54.80000000000007" height="13.2" fill="#c7c7c7" />
<text transform="translate(751.55 415.20) scale(0.9172 1)" font-size="9.90" fill="#28557a" stroke="#28557a" stroke-width="0.065">0</text>
<text transform="translate(809.65 415.20) scale(0.9172 1)" font-size="9.90" fill="#28557a" stroke="#28557a" stroke-width="0.065">0</text>
<text transform="translate(106.95 428.40) scale(0.9172 1)" font-size="9.90" fill="#28557a" stroke="#28557a" stroke-width="0.065">0</text>
<text transform="translate(203.85 428.40) scale(0.9172 1)" font-size="9.90" fill="#28557a" stroke="#28557a" stroke-width="0.065">0</text>
<text transform="translate(292.05 428.40) scale(0.9172 1)" font-size="9.90" fill="#28557a" stroke="#28557a" stroke-width="0.065">0</text>
<text transform="translate(330.53 428.40) scale(0.9172 1)" font-size="9.90" fill="#28557a" stroke="#28557a" stroke-width="0.065">-116.52915</text>
<text transform="translate(384.68 428.40) scale(0.9172 1)" font-size="9.90" fill="#28557a" stroke="#28557a" stroke-width="0.065">-12.70119</text>
<text transform="translate(431.73 428.40) scale(0.9172 1)" font-size="9.90" fill="#28557a" stroke="#28557a" stroke-width="0.065">-12.701194</text>
<text transform="translate(569.57 428.40) scale(0.9172 1)" font-size="9.90" fill="#28557a" stroke="#28557a" stroke-width="0.065">-1000</text>
<text transform="translate(660.90 428.40) scale(0.9172 1)" font-size="9.90" fill="#28557a" stroke="#28557a" stroke-width="0.065">-2.980178</text>
<rect x="703.4" y="418.0" width="54.80000000000007" height="13.2" fill="#94b1bc" />
<text transform="translate(751.55 428.40) scale(0.9172 1)" font-size="9.90" fill="#28557a" stroke="#28557a" stroke-width="0.065">0</text>
<text transform="translate(809.65 428.40) scale(0.9172 1)" font-size="9.90" fill="#28557a" stroke="#28557a" stroke-width="0.065">0</text>
<rect x="703.4" y="431.2" width="54.8" height="3.8000000000000114" fill="#c7c7c7" />
<rect x="704.2" y="88.2" width="53.6" height="346" fill="none" stroke="#e0262b" stroke-width="1.5"/>
<rect x="859.7" y="75.5" width="14.3" height="359.5" fill="#ebebeb" />
<rect x="861.5" y="76" width="10.8" height="10.7" fill="#fff" stroke="#cfcfcf" stroke-width="0.7"/>
<path d="M864.5 83 H869.3 L866.9 80.6 Z" fill="#222"/>
<rect x="861.5" y="87.8" width="10.8" height="10.7" fill="#fff" stroke="#cfcfcf" stroke-width="0.7"/>
<rect x="861.9" y="424.8" width="10.4" height="10.4" fill="#fff" stroke="#cfcfcf" stroke-width="0.7"/>
<path d="M864.7 429 H869.5 L867.1 431.4 Z" fill="#222"/>
<rect x="2" y="435" width="872" height="15.7" fill="#e8e8e8" />
<rect x="2" y="435" width="858" height="0.9" fill="#d4d4d4" />
<path d="M17 440.5 L15.3 442.4 L17 444.3" fill="none" stroke="#bdbdbd" stroke-width="0.9"/>
<path d="M31.6 440.5 L33.3 442.4 L31.6 444.3" fill="none" stroke="#bdbdbd" stroke-width="0.9"/>
<rect x="55.9" y="435" width="152.9" height="13.5" fill="#ffffff" />
<rect x="55.9" y="448.2" width="152.9" height="1.4" fill="#2e7d4f" />
<text transform="translate(61.50 445.20) scale(0.9091 1)" font-size="9.41" fill="#1e6e43" stroke="#1e6e43" stroke-width="0.198" font-weight="bold">LTENR_Radio_Measurements_Log</text>
<text transform="translate(217.60 445.20) scale(0.8929 1)" font-size="9.96" fill="#505050" stroke="#505050" stroke-width="0.056">Pivot Table(Custom)</text>
<rect x="306.5" y="437.5" width="0.8" height="10.5" fill="#c4c4c4" />
<g fill="none" stroke="#777" stroke-width="0.9"><circle cx="329.5" cy="442.6" r="4.8"/><path d="M329.5 440 V445.2 M326.9 442.6 H332.1"/></g>
<g fill="#9a9a9a"><rect x="523.4" y="438.8" width="0.9" height="0.9"/><rect x="523.4" y="441.8" width="0.9" height="0.9"/><rect x="523.4" y="444.8" width="0.9" height="0.9"/></g>
<rect x="533" y="437.3" width="10.5" height="11" fill="#fff" stroke="#cfcfcf" stroke-width="0.7"/>
<path d="M539.8 440.4 V445.2 L537.2 442.8 Z" fill="#222"/>
<rect x="704" y="437.5" width="156" height="10.9" fill="#fff" stroke="#cfcfcf" stroke-width="0.7"/>
<rect x="850" y="437.5" width="10" height="10.9" fill="#fff" stroke="#cfcfcf" stroke-width="0.7"/>
<path d="M854.3 440.4 V445.2 L856.9 442.8 Z" fill="#222"/>
<rect x="2" y="450.7" width="872" height="14" fill="#f3f2f0" />
<rect x="2" y="463.8" width="872" height="1" fill="#f8f7f5" />
<rect x="2" y="464.8" width="872" height="1.3" fill="#939aa4" />
<text transform="translate(9.40 461.30) scale(0.8739 1)" font-size="7.60" fill="#5c5c5c" stroke="#5c5c5c" stroke-width="0.034">Ready</text>
<text transform="translate(39.00 461.30) scale(0.9466 1)" font-size="7.60" fill="#5c5c5c" stroke="#5c5c5c" stroke-width="0.032">9840 of 21650 records found</text>
<g fill="none" stroke="#5a5a5a" stroke-width="0.8" stroke-linejoin="round"><circle cx="148.8" cy="454.9" r="1.3"/><path d="M144.2 456.8 L148.8 457.6 L153.2 456.8 L153.4 458 L150.4 459 L151.5 462.6 L150.3 463 L148.8 460.4 L147.3 463 L146.1 462.6 L147.2 459 L144.1 458 Z"/></g>
<text transform="translate(155.80 461.30) scale(0.9165 1)" font-size="7.60" fill="#5c5c5c" stroke="#5c5c5c" stroke-width="0.033">Accessibility: Unavailable</text>
<rect x="463" y="453.2" width="77.2" height="10.3" fill="none" stroke="#e0262b" stroke-width="1.1"/>
<text transform="translate(467.60 461.30) scale(0.9170 1)" font-size="7.60" fill="#5c5c5c" stroke="#5c5c5c" stroke-width="0.033">Average: 0.634146341</text>
<text transform="translate(551.20 461.30) scale(0.9152 1)" font-size="7.60" fill="#5c5c5c" stroke="#5c5c5c" stroke-width="0.033">Count: 9841</text>
<text transform="translate(599.90 461.30) scale(0.9278 1)" font-size="7.60" fill="#5c5c5c" stroke="#5c5c5c" stroke-width="0.032">Sum: 6240</text>
<rect x="672.3" y="451.2" width="26.4" height="13.6" fill="#d9d9d9" />
<g fill="none" stroke="#4a4a4a" stroke-width="1"><rect x="680.7" y="453.5" width="8.9" height="8.4" rx="1"/><path d="M683.7 453.5 V461.9 M686.6 453.5 V461.9 M680.7 456.3 H689.6 M680.7 459.1 H689.6"/></g>
<g fill="none" stroke="#555" stroke-width="1"><rect x="708.3" y="453.5" width="9.1" height="8.4" rx="1"/><rect x="710.8" y="455.5" width="4.1" height="4.4"/><path d="M710.8 457.7 H714.9" stroke-width="0.8"/></g>
<g fill="none" stroke="#555" stroke-width="1"><rect x="735.5" y="453.5" width="9" height="8.4" rx="1"/><path d="M741.2 453.5 V458.4 H735.5 M738.4 453.5 V457"/></g>
<path d="M757.6 458.3 H762.5" stroke="#888" stroke-width="0.8"/>
<path d="M766.3 458.3 H833.3" stroke="#666" stroke-width="1"/>
<rect x="798.4" y="453.6" width="3.2" height="8.6" fill="#444" />
<path d="M837.5 458.3 H842.5 M840 455.8 V460.8" stroke="#888" stroke-width="0.8"/>
<text transform="translate(851.30 461.30) scale(0.9105 1)" font-size="7.60" fill="#5c5c5c" stroke="#5c5c5c" stroke-width="0.033">100%</text>
<rect x="0" y="0" width="1" height="1" fill="#000"/><rect x="875" y="0" width="1" height="1" fill="#000"/><rect x="0" y="467" width="1" height="1" fill="#000"/><rect x="875" y="467" width="1" height="1" fill="#000"/>
</svg></body></html>
